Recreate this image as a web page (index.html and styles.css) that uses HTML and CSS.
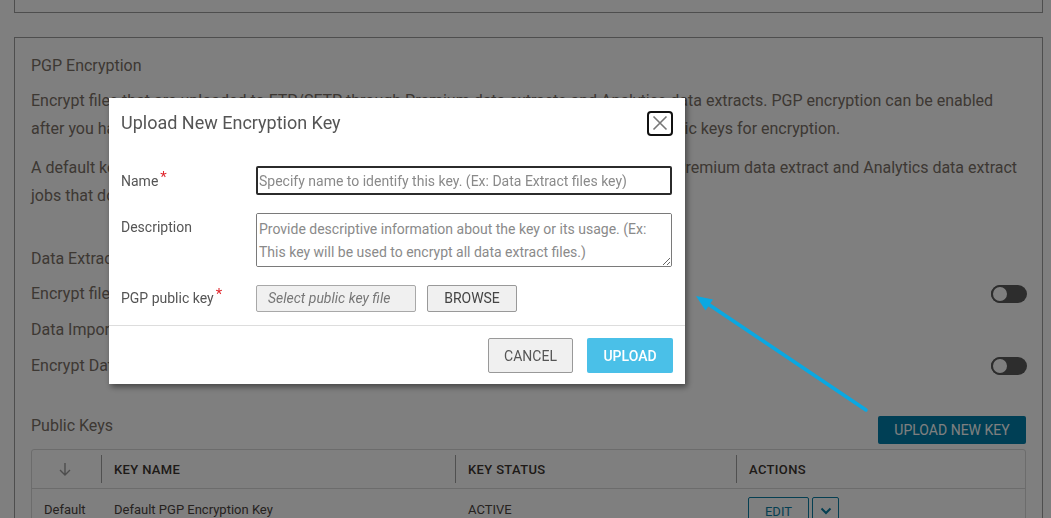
FILE: index.html
```
<!DOCTYPE html>
<html lang="en">
<head>
<meta charset="utf-8">
<title>PGP Encryption</title>
<link rel="stylesheet" href="styles.css">
</head>
<body>
<div class="page">
  <div class="card-top"></div>
  <div class="card">
    <div class="title">PGP Encryption</div>
    <p class="para p1">Encrypt files that are uploaded to FTP/SFTP through Premium data extracts and Analytics data extracts. PGP encryption can be enabled after you have uploaded at least one key. You can upload and manage one or more PGP public keys for encryption.</p>
    <p class="para p2">A default key is used to encrypt files if a key is not selected. It is applied to all of these new Premium data extract and Analytics data extract jobs that do not have a key assigned.</p>
    <div class="section">Data Extracts</div>
    <div class="setting first"><span>Encrypt files for data extracts</span><span class="toggle"><span class="knob"></span></span></div>
    <div class="section sub">Data Imports</div>
    <div class="setting"><span>Encrypt Data Imports</span><span class="toggle"><span class="knob"></span></span></div>
    <div class="keys-head">
      <span class="keys-title">Public Keys</span>
      <button class="btn-primary">UPLOAD NEW KEY</button>
    </div>
    <div class="table">
      <div class="thead">
        <div class="th sort"><svg width="12" height="14" viewBox="0 0 12 14"><path d="M6 1v12M1 8l5 5 5-5" fill="none" stroke="#9a9a9a" stroke-width="1.4"/></svg></div>
        <div class="th line">KEY NAME</div>
        <div class="th line">KEY STATUS</div>
        <div class="th line">ACTIONS</div>
      </div>
      <div class="trow">
        <div class="td first-col">Default</div>
        <div class="td">Default PGP Encryption Key</div>
        <div class="td">ACTIVE</div>
        <div class="td actions"><button class="btn-edit">EDIT</button><button class="btn-drop"><svg width="12" height="8" viewBox="0 0 12 8"><path d="M1.5 1.5l4.5 4.5 4.5-4.5" fill="none" stroke="#0a7ea4" stroke-width="2"/></svg></button></div>
      </div>
    </div>
  </div>
</div>

<div class="overlay"></div>

<div class="modal">
  <div class="modal-head">
    <div class="modal-title">Upload New Encryption Key</div>
    <button class="close" aria-label="Close"><svg width="16" height="16" viewBox="0 0 16 16"><path d="M1.5 1.5l13 13M14.5 1.5l-13 13" stroke="#777" stroke-width="1.6" fill="none"/></svg></button>
  </div>
  <div class="modal-body">
    <div class="frow">
      <label class="flabel">Name<span class="req">*</span></label>
      <input class="finput" type="text" placeholder="Specify name to identify this key. (Ex: Data Extract files key)">
    </div>
    <div class="frow top">
      <label class="flabel">Description</label>
      <textarea class="farea" placeholder="Provide descriptive information about the key or its usage. (Ex: This key will be used to encrypt all data extract files.)"></textarea>
    </div>
    <div class="frow">
      <label class="flabel">PGP public key<span class="req">*</span></label>
      <div class="file">Select public key file</div>
      <button class="btn-browse">BROWSE</button>
    </div>
  </div>
  <div class="modal-foot">
    <button class="btn-cancel">CANCEL</button>
    <button class="btn-upload">UPLOAD</button>
  </div>
</div>

<svg class="annot" width="1051" height="518" viewBox="0 0 1051 518">
  <line x1="866" y1="410" x2="708" y2="304" stroke="#0aa8e2" stroke-width="3.5" stroke-linecap="round"/>
  <polygon points="696,296 713,299.5 705.5,310.5" fill="#0aa8e2"/>
</svg>
</body>
</html>
```
FILE: styles.css
```
* { box-sizing: border-box; }
html, body { margin: 0; padding: 0; }
body {
  font-family: Roboto, "Liberation Sans", Arial, sans-serif;
  background: #ffffff;
  color: #7a7067;
  width: 1051px;
  height: 518px;
  overflow: hidden;
}
.page { padding: 0 8px 0 14px; }
.card-top {
  height: 13px;
  border: 1px solid #9c9c9c;
  border-top: 0;
}
.card {
  margin-top: 24px;
  border: 1px solid #9c9c9c;
  padding: 16px 16px 40px 16px;
}
.title { font-size: 16px; line-height: 24px; }
.para { margin: 0; font-size: 16px; line-height: 28px; }
.p1 { margin-top: 9px; }
.p2 { margin-top: 11px; }
.section { margin-top: 35px; font-size: 16px; line-height: 28px; }
.section.sub { margin-top: 8px; }
.setting {
  display: flex; justify-content: space-between; align-items: center;
  margin-top: 8px; font-size: 16px; line-height: 28px;
}
.setting.first { margin-top: 7px; }
.toggle {
  width: 36px; height: 18px; border-radius: 9px; background: #5b5b5b;
  position: relative; display: block; margin-right: -1px;
}
.knob {
  position: absolute; left: 0; top: 0; width: 18px; height: 18px;
  border-radius: 50%; background: #fff; border: 2px solid #5b5b5b;
}
.keys-head {
  display: flex; justify-content: space-between; align-items: flex-start;
  margin-top: 32px; height: 32px;
}
.keys-title { font-size: 16px; line-height: 28px; }
.btn-primary {
  margin-top: 4px; height: 28px; padding: 0 16px; border: 0; border-radius: 2px;
  background: #007eaa; color: #fff; font-family: inherit; font-size: 14px;
  width: 148px; margin-right: 0;
}
.table {
  margin-top: 5px; border: 1px solid #d8d8d8; border-radius: 3px;
}
.thead, .trow {
  display: grid; grid-template-columns: 69px 354px 281px 1fr;
}
.thead { padding: 5px 0; border-bottom: 1px solid #d8d8d8; }
.th {
  height: 28px; display: flex; align-items: center; padding-left: 12px;
  font-size: 13px; font-weight: 500; letter-spacing: 0.35px; color: #3c3530;
}
.th.line { border-left: 1px solid #a0a0a0; }
.th.sort { justify-content: center; padding: 0 4px 0 0; }
.trow { padding-top: 8px; }
.td {
  font-size: 13px; color: #4c443e; padding-left: 13px; line-height: 26px;
}
.td.first-col { padding-left: 12px; }
.td.actions { display: flex; gap: 3px; padding-left: 12px; }
.btn-edit {
  width: 61px; height: 28px; background: #fff; border: 1px solid #0a7ea4;
  color: #0a7ea4; font-family: inherit; font-size: 13px; border-radius: 2px;
}
.btn-drop {
  width: 27px; height: 28px; background: #fff; border: 1px solid #0a7ea4;
  border-radius: 2px; display: flex; align-items: center; justify-content: center; padding: 0;
}
.overlay {
  position: fixed; inset: 0; background: rgba(0, 0, 0, 0.5);
}
.modal {
  position: fixed; left: 109px; top: 98px; width: 576px; height: 286px;
  background: #fff; box-shadow: 2px 3px 6px rgba(0, 0, 0, 0.45);
  color: #555;
}
.modal-head {
  display: flex; justify-content: space-between; align-items: center;
  padding: 12px 12px 0 12px; height: 38px;
}
.modal-title { font-size: 18px; line-height: 26px; color: #555; }
.close {
  width: 26px; height: 25px; border: 2px solid #111; border-radius: 4px;
  background: #fff; padding: 0; display: flex; align-items: center; justify-content: center;
}
.modal-body { padding: 30px 13px 13px 12px; }
.frow { display: flex; align-items: center; margin-top: 18px; }
.frow:first-child { margin-top: 0; }
.frow.top { align-items: flex-start; margin-top: 18px; }
.frow:last-child { margin-top: 17px; }
.flabel { width: 135px; flex: none; font-size: 14px; line-height: 28px; color: #555; }
.req { color: #e0282e; font-size: 15px; position: relative; top: -4px; margin-left: 2px; }
.finput {
  flex: 1; height: 29px; border: 2px solid #2b2b2b; border-radius: 2px;
  padding: 0 1px; font-family: inherit; font-size: 14px; color: #333; outline: none;
}
.finput::placeholder, .farea::placeholder { color: #8a8a8a; }
.farea {
  flex: 1; height: 54px; border: 1px solid #7a7a7a; border-radius: 2px;
  padding: 4px 2px; font-family: inherit; font-size: 14px; line-height: 23px;
  resize: vertical; outline: none;
}
.file {
  width: 160px; height: 27px; background: #f0f0f0; border: 1px solid #a8a8a8; border-radius: 2px;
  font-size: 14px; font-style: italic; color: #777; line-height: 25px; padding-left: 11px;
}
.btn-browse {
  margin-left: 11px; width: 90px; height: 27px; background: #f0f0f0;
  border: 1px solid #999; border-radius: 2px; font-family: inherit; font-size: 14px; color: #444;
}
.modal-foot {
  border-top: 1px solid #ddd; padding: 12px 12px 12px 12px;
  display: flex; justify-content: flex-end; gap: 14px;
}
.btn-cancel {
  width: 85px; height: 35px; background: #f0f0f0; border: 1px solid #999; border-radius: 2px;
  font-family: inherit; font-size: 14px; color: #555;
}
.btn-upload {
  width: 86px; height: 35px; background: #4ac0e8; border: 0; border-radius: 2px;
  font-family: inherit; font-size: 14px; font-weight: 500; color: #fff;
}
.annot { position: fixed; left: 0; top: 0; pointer-events: none; }
```
